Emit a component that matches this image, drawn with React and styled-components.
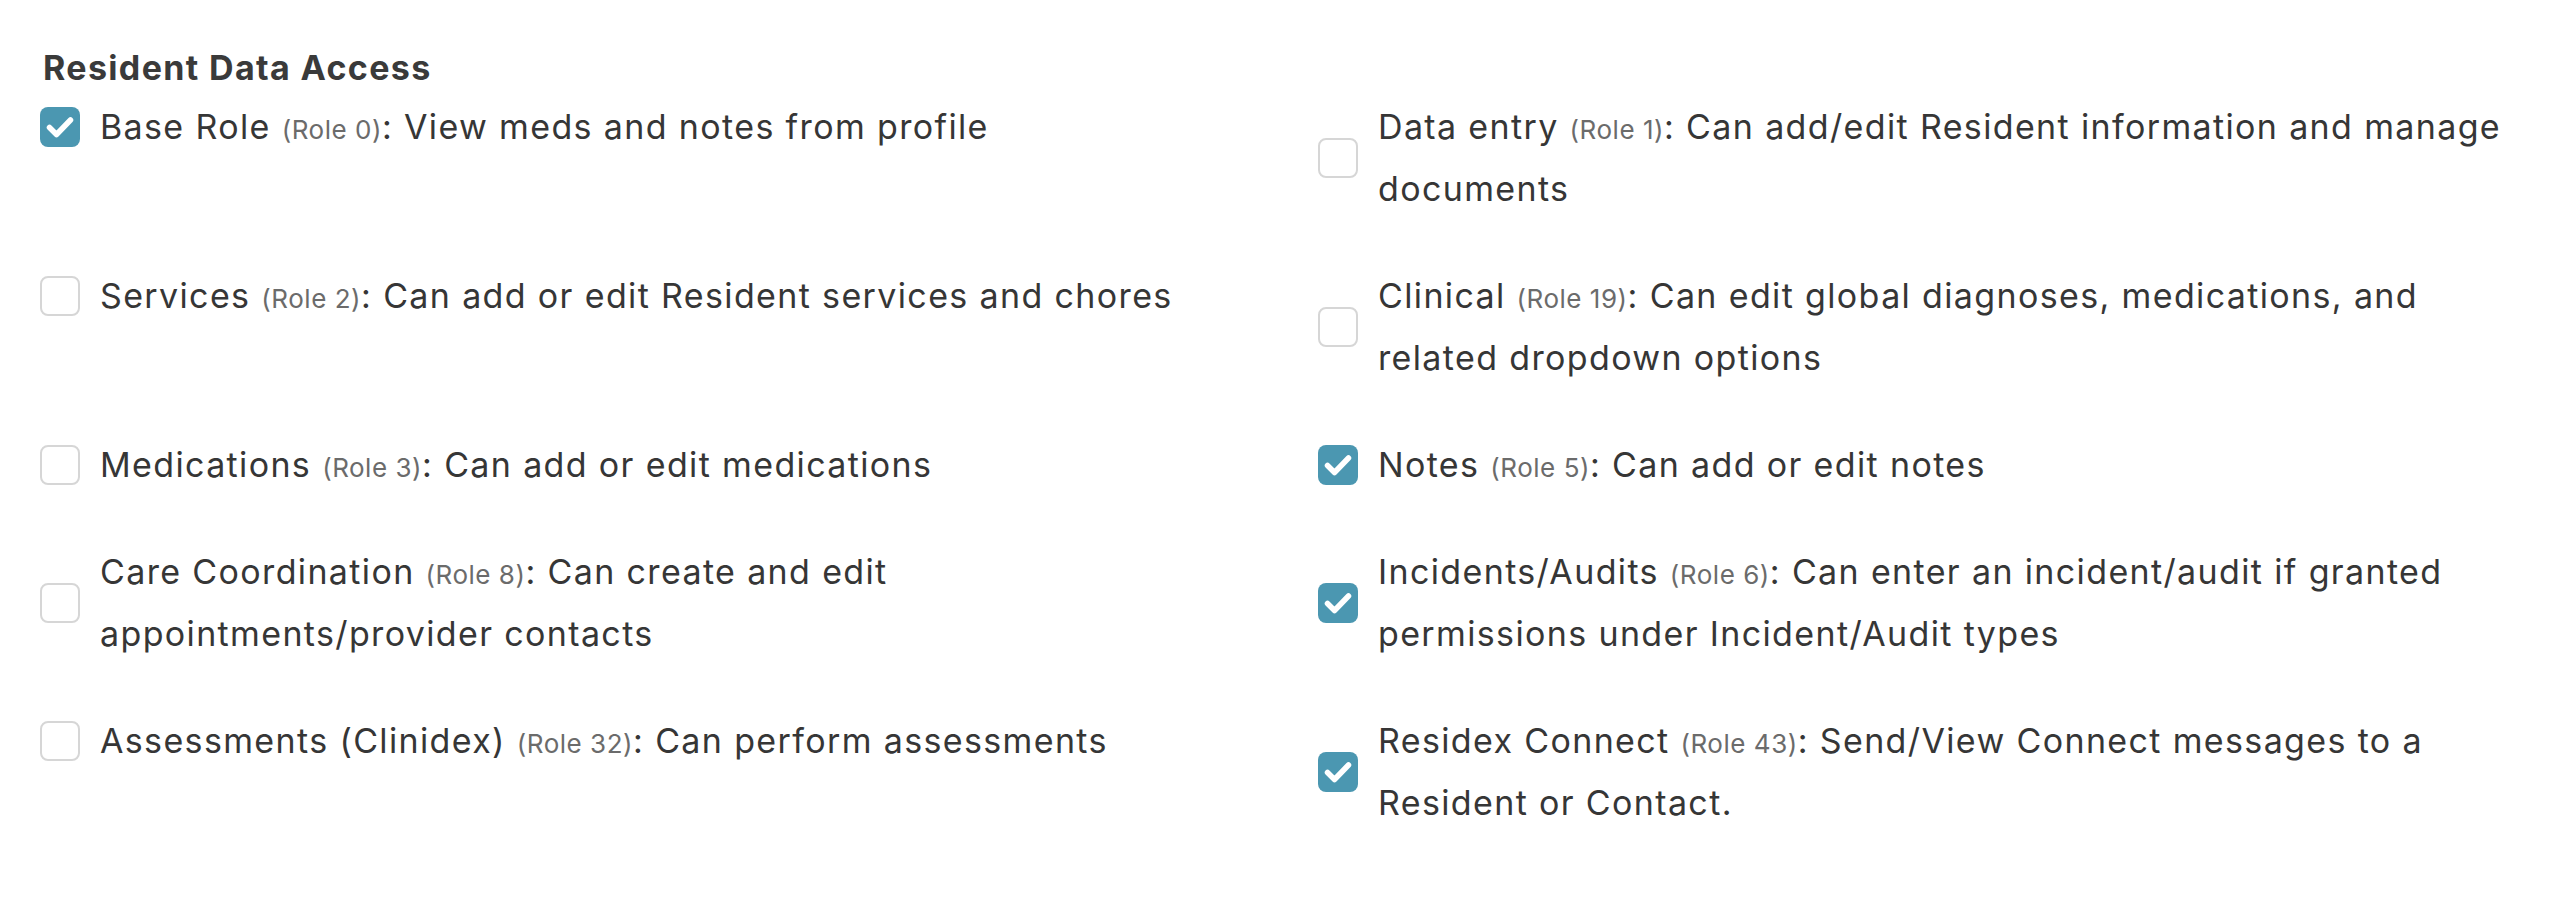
import React from 'react';
import styled, { createGlobalStyle } from 'styled-components';

const GlobalStyle = createGlobalStyle`
    body {
        margin: 0;
        background: #fff;
        font-family: Inter, "Noto Sans", sans-serif;
        color: #363636;
    }
`;

const Section = styled.section`
    padding: 47px 40px 40px;
`;

const Heading = styled.h2`
    margin: 0 0 8px;
    padding-left: 3px;
    font-size: 34px;
    line-height: 41px;
    font-weight: 700;
    letter-spacing: 0.04em;
    color: #3a3a3a;
`;

const RoleGrid = styled.div`
    display: grid;
    grid-template-columns: 1fr 1fr;
    column-gap: 66px;
    row-gap: 45px;
    align-items: start;
`;

const RoleItem = styled.label`
    display: flex;
    align-items: center;
    gap: 20px;
    cursor: pointer;
`;

const Box = styled.span`
    flex-shrink: 0;
    width: 40px;
    height: 40px;
    box-sizing: border-box;
    border-radius: 8px;
    display: flex;
    align-items: center;
    justify-content: center;
    background: ${props => props.checked ? '#4b97b1' : '#fff'};
    border: ${props => props.checked ? 'none' : '2px solid #d6d6d6'};
`;

const RoleText = styled.span`
    font-size: 34px;
    line-height: 62px;
    letter-spacing: 0.04em;
    color: #363636;
`;

const RoleNum = styled.span`
    font-size: 26px;
    line-height: 1;
    letter-spacing: 0.02em;
    color: #6b6b6b;
`;

const roles = [
    { name: 'Base Role', num: 0, desc: 'View meds and notes from profile', checked: true },
    { name: 'Data entry', num: 1, desc: 'Can add/edit Resident information and manage documents', checked: false },
    { name: 'Services', num: 2, desc: 'Can add or edit Resident services and chores', checked: false },
    { name: 'Clinical', num: 19, desc: 'Can edit global diagnoses, medications, and related dropdown options', checked: false },
    { name: 'Medications', num: 3, desc: 'Can add or edit medications', checked: false },
    { name: 'Notes', num: 5, desc: 'Can add or edit notes', checked: true },
    { name: 'Care Coordination', num: 8, desc: 'Can create and edit appointments/provider contacts', checked: false },
    { name: 'Incidents/Audits', num: 6, desc: 'Can enter an incident/audit if granted permissions under Incident/Audit types', checked: true },
    { name: 'Assessments (Clinidex)', num: 32, desc: 'Can perform assessments', checked: false },
    { name: 'Residex Connect', num: 43, desc: 'Send/View Connect messages to a Resident or Contact.', checked: true },
];

const Checkbox = ({ checked }) => (
    <Box checked={checked}>
        {checked && (
            <svg width="40" height="40" viewBox="0 0 40 40">
                <path d="M9.5 20.5 L16.5 27.5 L30.5 13" fill="none" stroke="#fff" strokeWidth="5.5" strokeLinecap="round" strokeLinejoin="round" />
            </svg>
        )}
    </Box>
);

const App = () => {
    return (
        <>
            <GlobalStyle />
            <Section>
                <Heading>Resident Data Access</Heading>
                <RoleGrid>
                    {roles.map(role => (
                        <RoleItem key={role.num}>
                            <Checkbox checked={role.checked} />
                            <RoleText>
                                {role.name} <RoleNum>(Role {role.num})</RoleNum>: {role.desc}
                            </RoleText>
                        </RoleItem>
                    ))}
                </RoleGrid>
            </Section>
        </>
    );
};

export default App;
